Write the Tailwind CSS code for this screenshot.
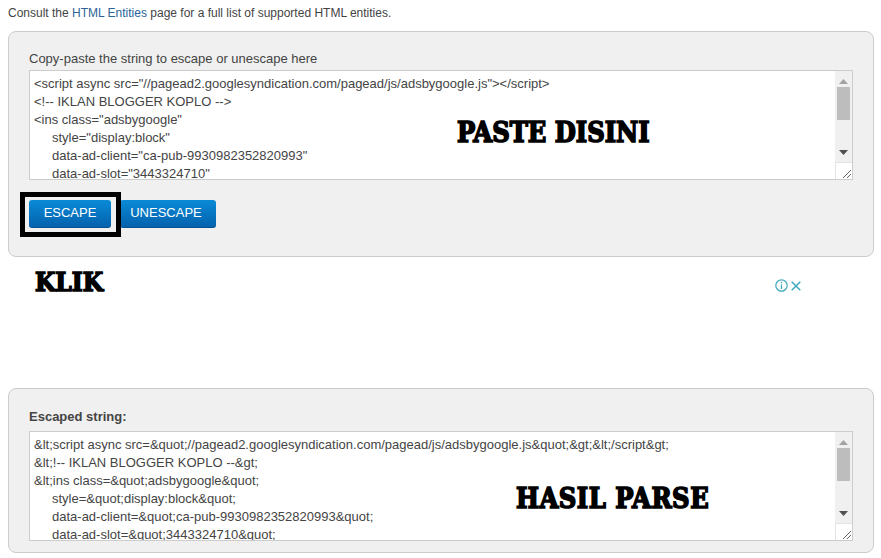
<!DOCTYPE html>
<html lang="en">
  <head>
    <meta charset="UTF-8" />
    <meta name="viewport" content="width=device-width, initial-scale=1.0" />
    <title>HTML Escape</title>
    <script src="https://cdn.jsdelivr.net/npm/@tailwindcss/browser@4"></script>
  </head>
  <body class="bg-white h-[558px] overflow-hidden font-['Liberation_Sans',Arial,sans-serif] text-[#444]">
    <div class="pl-2 w-[874px]">
      <p class="h-[31px] pt-[5px] text-[12px] leading-[16px] text-[#444]">
        Consult the <a href="#" class="text-[#2a6496]">HTML Entities</a> page for a full list of supported HTML entities.
      </p>

      <!-- Input panel -->
      <section class="relative h-[226px] bg-[#f0f0f0] border border-[#ccc] rounded-[8px] pt-[19px] px-5">
        <label class="block text-[13px] leading-[16px] text-[#444] mb-[3px]">Copy-paste the string to escape or unescape here</label>
        <div class="relative h-[110px] bg-white border border-[#ccc] overflow-hidden">
          <div class="pl-1 pt-1 text-[13px] leading-[18px] text-[#444]">
            <div>&lt;script async src="//pagead2.googlesyndication.com/pagead/js/adsbygoogle.js"&gt;&lt;/script&gt;</div>
            <div>&lt;!-- IKLAN BLOGGER KOPLO --&gt;</div>
            <div>&lt;ins class="adsbygoogle"</div>
            <div class="pl-[18px]">style="display:block"</div>
            <div class="pl-[18px]">data-ad-client="ca-pub-9930982352820993"</div>
            <div class="pl-[18px]">data-ad-slot="3443324710"</div>
          </div>
          <div class="absolute right-0 top-0 bottom-0 w-[17px] bg-[#f0f0f0] flex flex-col items-center">
            <svg class="mt-2" width="9" height="5" viewBox="0 0 9 5"><path d="M4.5 0 9 5H0z" fill="#a3a3a3" /></svg>
            <div class="mt-[3px] w-[13px] h-[33px] bg-[#bdbdbd]"></div>
            <svg class="mt-[30px]" width="9" height="5" viewBox="0 0 9 5"><path d="M0 0h9L4.500 5z" fill="#505050" /></svg>
            <div class="absolute bottom-0 left-0 w-[17px] h-[17px] bg-white border-t border-l border-[#e3e3e3]">
              <svg class="absolute right-0 bottom-0" width="12" height="12" viewBox="0 0 12 12"><path d="M3 11 11 3M7 11l4-4" stroke="#666" stroke-width="1" fill="none" /></svg>
            </div>
          </div>
          <span class="absolute left-[427px] top-[46px] font-['DejaVu_Serif_Condensed','DejaVu_Serif',serif] font-bold text-[27px] leading-[32px] text-black [-webkit-text-stroke:1.5px_black] whitespace-nowrap">PASTE DISINI</span>
        </div>
        <div class="flex gap-[9px] mt-5">
          <button class="w-[82px] h-[28px] pb-[2px] rounded-[3px] bg-gradient-to-b from-[#0a8ad6] to-[#0562ae] border-b border-[#04508f] text-white text-[13px]">ESCAPE</button>
          <button class="w-[96px] h-[28px] pb-[2px] pr-[4px] rounded-[3px] bg-gradient-to-b from-[#0a8ad6] to-[#0562ae] border-b border-[#04508f] text-white text-[13px]">UNESCAPE</button>
        </div>
        <!-- black annotation box around ESCAPE -->
        <div class="absolute left-[11px] top-[160px] w-[101px] h-[45px] border-[5px] border-black"></div>
      </section>

      <!-- Ad gap -->
      <div class="relative h-[131px]">
        <span class="absolute left-[27px] top-[9px] font-['DejaVu_Serif_Condensed','DejaVu_Serif',serif] font-bold text-[26px] leading-[32px] text-black [-webkit-text-stroke:1.5px_black]">KLIK</span>
        <div class="absolute left-[767px] top-[22px] flex items-center gap-[3px]">
          <svg width="13" height="13" viewBox="0 0 13 13" fill="none" stroke="#3fa9bd"><circle cx="6.500" cy="6.500" r="5.700" stroke-width="1.200" /><path d="M6.500 5.500V10M6.500 3v1.300" stroke-width="1.300" /></svg>
          <svg width="10" height="10" viewBox="0 0 10 10" fill="none" stroke="#3fa9bd" stroke-width="1.500"><path d="M.7.7l8.600 8.600M9.300.7.700 9.300" /></svg>
        </div>
      </div>

      <!-- Output panel -->
      <section class="h-[165px] bg-[#f0f0f0] border border-[#ccc] rounded-[8px] pt-5 px-5">
        <label class="block font-bold text-[13px] leading-[16px] text-[#444] mb-[6px]">Escaped string:</label>
        <div class="relative h-[110px] bg-white border border-[#ccc] overflow-hidden">
          <div class="pl-1 pt-1 text-[13px] leading-[18px] text-[#444]">
            <div>&amp;lt;script async src=&amp;quot;//pagead2.googlesyndication.com/pagead/js/adsbygoogle.js&amp;quot;&amp;gt;&amp;lt;/script&amp;gt;</div>
            <div>&amp;lt;!-- IKLAN BLOGGER KOPLO --&amp;gt;</div>
            <div>&amp;lt;ins class=&amp;quot;adsbygoogle&amp;quot;</div>
            <div class="pl-[18px]">style=&amp;quot;display:block&amp;quot;</div>
            <div class="pl-[18px]">data-ad-client=&amp;quot;ca-pub-9930982352820993&amp;quot;</div>
            <div class="pl-[18px]">data-ad-slot=&amp;quot;3443324710&amp;quot;</div>
          </div>
          <div class="absolute right-0 top-0 bottom-0 w-[17px] bg-[#f0f0f0] flex flex-col items-center">
            <svg class="mt-2" width="9" height="5" viewBox="0 0 9 5"><path d="M4.5 0 9 5H0z" fill="#a3a3a3" /></svg>
            <div class="mt-[3px] w-[13px] h-[33px] bg-[#bdbdbd]"></div>
            <svg class="mt-[30px]" width="9" height="5" viewBox="0 0 9 5"><path d="M0 0h9L4.500 5z" fill="#505050" /></svg>
            <div class="absolute bottom-0 left-0 w-[17px] h-[17px] bg-white border-t border-l border-[#e3e3e3]">
              <svg class="absolute right-0 bottom-0" width="12" height="12" viewBox="0 0 12 12"><path d="M3 11 11 3M7 11l4-4" stroke="#666" stroke-width="1" fill="none" /></svg>
            </div>
          </div>
          <span class="absolute left-[486px] top-[51px] font-['DejaVu_Serif_Condensed','DejaVu_Serif',serif] font-bold text-[27px] leading-[32px] tracking-[0.5px] text-black [-webkit-text-stroke:1.5px_black] whitespace-nowrap">HASIL PARSE</span>
        </div>
      </section>
    </div>
  </body>
</html>
